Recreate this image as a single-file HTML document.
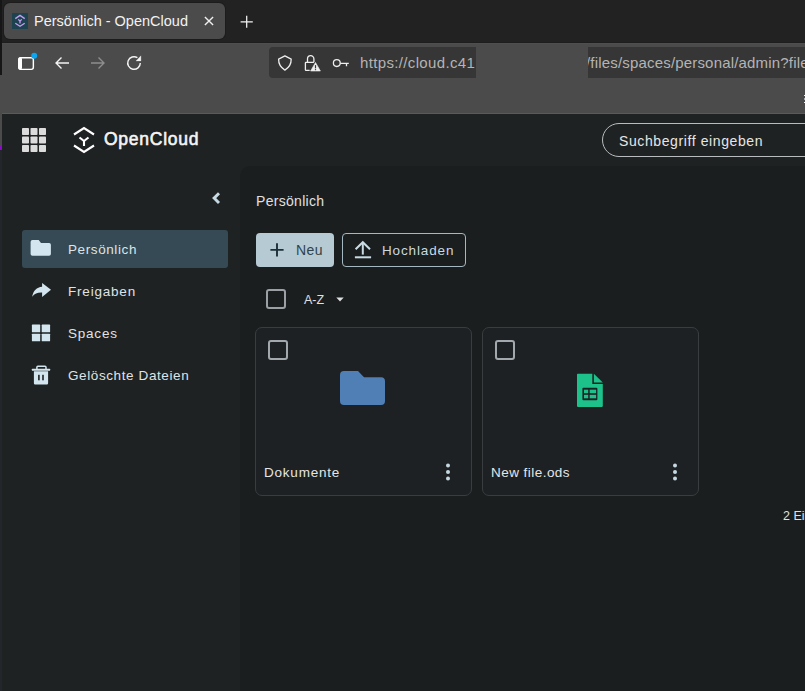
<!DOCTYPE html>
<html><head><meta charset="utf-8">
<style>
*{box-sizing:border-box;margin:0;padding:0}
html,body{width:805px;height:691px;overflow:hidden;background:#222222;font-family:"Liberation Sans",sans-serif;position:relative}
.abs{position:absolute}
#tabbar{left:0;top:0;width:805px;height:42px;background:#222222}
#lstrip{left:0;top:0;width:2px;height:75px;background:#161616}
#tab{left:4px;top:3px;width:221px;height:36px;background:#4b4b4b;border-radius:6px;box-shadow:0 0 0 1px #1c1c1c}
#fav{left:12px;top:13px;width:16px;height:16px;background:#1d4250}
#tabtitle{left:34px;top:12px;font-size:14.5px;color:#f2f2f2;white-space:nowrap;line-height:18px}
#toolbar{left:0;top:43px;width:805px;height:70px;background:#4b4b4b;border-top:1px solid #4f4f4f}
#tbdark{left:0;top:42px;width:805px;height:1px;background:#1e1e1e}
#tbline{left:0;top:113px;width:805px;height:1px;background:#5a5a5a}
#url1{left:269px;top:47px;width:207px;height:31px;background:#363636;border-radius:4px 0 0 4px}
#url2{left:588px;top:47px;width:217px;height:31px;background:#363636}
.urltext{top:55px;font-size:15px;color:#b4b4b4;white-space:nowrap;line-height:16px;letter-spacing:0.35px}
#page{left:2px;top:114px;width:803px;height:577px;background:#1f2223}
#main{left:240px;top:166px;width:565px;height:525px;background:#1b1e1f;border-top-left-radius:10px}
.sbtext{font-size:13.5px;color:#dfe3e6;white-space:nowrap;line-height:17px;letter-spacing:0.6px}
.card{width:217px;height:169px;border:1px solid #3a3d40;border-radius:7px;background:#1e2123}
.cb{width:20px;height:20px;border:2px solid #a2a9ae;border-radius:3px}
.cardtext{font-size:13.5px;color:#e3e6e8;line-height:17px;white-space:nowrap}
</style></head><body>
<div id="tabbar" class="abs"></div>
<div id="tab" class="abs"></div>
<div id="fav" class="abs"></div>
<div id="tabtitle" class="abs">Persönlich - OpenCloud</div>
<div id="tbdark" class="abs"></div>
<div id="toolbar" class="abs"></div>
<div id="tbline" class="abs"></div>
<div id="url1" class="abs"></div>
<div id="url2" class="abs"></div>
<div class="abs urltext" style="left:360px">https://cloud.c41</div>
<div class="abs" style="left:588px;top:47px;width:217px;height:31px;overflow:hidden"><div class="abs urltext" style="left:-2px;top:8px;letter-spacing:0.18px">/files/spaces/personal/admin?file</div></div>
<div id="page" class="abs"></div>
<div id="lstrip" class="abs"></div>
<div id="main" class="abs"></div>


<!-- browser chrome icons -->
<svg class="abs" style="left:12px;top:13px" width="16" height="16" viewBox="0 0 16 16"><rect width="16" height="16" fill="#1d4250"/><g fill="none" stroke="#c49ff0" stroke-width="1.3"><polyline points="3.3,5.6 8,2.4 12.7,5.6"/><polyline points="3.3,10.2 8,13.3 12.7,10.2"/><polyline points="6.1,6.5 8,7.8 9.9,6.5"/><line x1="8" y1="7.8" x2="8" y2="10.6"/></g></svg>
<svg class="abs" style="left:203px;top:15px" width="12" height="12" viewBox="0 0 12 12"><path d="M1.9 2.1L10.1 10.1M10.1 2.1L1.9 10.1" stroke="#f0f0f0" stroke-width="1.4"/></svg>
<svg class="abs" style="left:239px;top:14px" width="16" height="16" viewBox="0 0 16 16"><path d="M7.7 1.7V13.8M1.6 7.8H13.8" stroke="#f4f4f4" stroke-width="1.25"/></svg>
<svg class="abs" style="left:16px;top:51px" width="24" height="20" viewBox="0 0 24 20"><rect x="2.75" y="6.65" width="14.6" height="11.7" rx="2" fill="none" stroke="#ffffff" stroke-width="1.45"/><rect x="2.4" y="6.3" width="3.6" height="12.4" rx="1.8" fill="#ffffff"/><circle cx="18.2" cy="4.8" r="3" fill="#0aa6f2"/></svg>
<svg class="abs" style="left:54px;top:56px" width="16" height="14" viewBox="0 0 16 14"><path d="M15 7H2M7.5 1.5L2 7L7.5 12.5" fill="none" stroke="#f4f4f4" stroke-width="1.35"/></svg>
<svg class="abs" style="left:90px;top:56px" width="16" height="14" viewBox="0 0 16 14"><path d="M1 7H14M8.5 1.5L14 7L8.5 12.5" fill="none" stroke="#8e8e8e" stroke-width="1.35"/></svg>
<svg class="abs" style="left:126px;top:55px" width="16" height="16" viewBox="0 0 16 16"><path d="M14.3 8A6.3 6.3 0 1 1 11.4 2.7" fill="none" stroke="#f4f4f4" stroke-width="1.4"/><path d="M14.9 0.8V5.9H10Z" fill="#f4f4f4" stroke="#f4f4f4" stroke-width="0.3" stroke-linejoin="round"/></svg>
<svg class="abs" style="left:277px;top:55px" width="16" height="16" viewBox="0 0 16 16"><path d="M7.9 0.9L1.6 4.1C1.5 9 3.5 12.5 7.9 15.1C12.3 12.5 14.3 9 14.2 4.1Z" fill="none" stroke="#eeeeee" stroke-width="1.3" stroke-linejoin="round"/></svg>
<svg class="abs" style="left:300px;top:52px" width="52" height="22" viewBox="0 0 52 22"><g fill="none" stroke="#eeeeee" stroke-width="1.3"><path d="M7.5 10.3V6.9A3.2 3.2 0 0 1 13.9 6.9V10.3"/><path d="M9.7 18.4H6A0.6 0.6 0 0 1 5.4 17.8V10.9A0.6 0.6 0 0 1 6 10.3H13.9"/><circle cx="36.8" cy="11.1" r="3.4"/></g><path d="M15.5 10.5L20.4 19H10.6Z" fill="#eeeeee" stroke="#eeeeee" stroke-width="0.6" stroke-linejoin="round"/><rect x="14.9" y="13.1" width="1.2" height="3.3" fill="#363636"/><rect x="14.9" y="17.1" width="1.2" height="1.1" fill="#363636"/><path d="M40.2 11.3H48.8M46.5 11.3V14.3" fill="none" stroke="#eeeeee" stroke-width="1.3"/></svg>
<div class="abs" style="left:0;top:146px;width:2px;height:4px;background:#8e0bc9"></div>
<div class="abs" style="left:0;top:113px;width:2px;height:33px;background:#4b4b4b"></div>
<div class="abs" style="left:0;top:150px;width:2px;height:541px;background:#23262b"></div>
<div class="abs" style="left:804px;top:95px;width:1px;height:1.3px;background:#eeeeee"></div><div class="abs" style="left:804px;top:98px;width:1px;height:2px;background:#a8b0b8"></div><div class="abs" style="left:804px;top:102px;width:1px;height:1.3px;background:#eeeeee"></div>
<!-- top bar -->
<svg class="abs" style="left:22px;top:128px" width="24" height="24" viewBox="0 0 24 24"><g fill="#dcdcdc">
<rect x="0" y="0" width="7" height="7" rx="0.8"/><rect x="8.5" y="0" width="7" height="7" rx="0.8"/><rect x="17" y="0" width="7" height="7" rx="0.8"/>
<rect x="0" y="8.5" width="7" height="7" rx="0.8"/><rect x="8.5" y="8.5" width="7" height="7" rx="0.8"/><rect x="17" y="8.5" width="7" height="7" rx="0.8"/>
<rect x="0" y="17" width="7" height="7" rx="0.8"/><rect x="8.5" y="17" width="7" height="7" rx="0.8"/><rect x="17" y="17" width="7" height="7" rx="0.8"/>
</g></svg>
<svg class="abs" style="left:72px;top:125px" width="24" height="30" viewBox="0 0 24 30"><g fill="none" stroke="#ffffff" stroke-width="2.1" stroke-linecap="butt" stroke-linejoin="miter">
<polyline points="2,9.5 12,3 22,9.5"/><polyline points="2,20.5 12,27 22,20.5"/>
<polyline points="7.5,12.5 12,16 16.5,12.5"/><line x1="12" y1="16" x2="12" y2="21"/></g></svg>
<div class="abs" style="left:104px;top:129px;font-size:17.5px;letter-spacing:0.75px;-webkit-text-stroke:0.6px #f4f4f4;color:#f4f4f4;line-height:20px;white-space:nowrap">OpenCloud</div>
<div class="abs" style="left:602px;top:123px;width:240px;height:34px;border:1px solid #b8bcbf;border-radius:17px"></div>
<div class="abs" style="left:619px;top:133px;font-size:14px;color:#e6e6e6;line-height:16px;letter-spacing:0.6px;white-space:nowrap">Suchbegriff eingeben</div>

<!-- sidebar -->
<svg class="abs" style="left:210px;top:191px" width="12" height="14" viewBox="0 0 12 14"><polyline points="9,2.2 4.1,7.1 9,12" fill="none" stroke="#c7dae4" stroke-width="2.9"/></svg>
<div class="abs" style="left:22px;top:230px;width:206px;height:38px;background:#354a54;border-radius:3px"></div>
<svg class="abs" style="left:30px;top:240px" width="22" height="17" viewBox="-0.6 -0.1 22 17"><path d="M1.8 0H8.1L10.4 2.8H18.5A1.8 1.8 0 0 1 20.3 4.6V13.9A1.8 1.8 0 0 1 18.5 15.7H1.8A1.8 1.8 0 0 1 0 13.9V1.8A1.8 1.8 0 0 1 1.8 0Z" fill="#d3e5ef"/></svg>
<div class="abs sbtext" style="left:68px;top:241px">Persönlich</div>
<svg class="abs" style="left:32px;top:282px" width="20" height="18" viewBox="0 0 20 18"><path d="M10.1 0.9L19 7.8L10.1 15V10.6C5.5 10.4 2.6 11.8 0.2 14.8C1.1 8.8 4.8 5.1 10.1 4.7Z" fill="#d3e5ef"/></svg>
<div class="abs sbtext" style="left:68px;top:283px;letter-spacing:0.8px">Freigaben</div>
<svg class="abs" style="left:31px;top:324px" width="21" height="19" viewBox="0 0 21 19"><g fill="#d3e5ef"><rect x="0.9" y="0.6" width="8.3" height="7.7" rx="0.6"/><rect x="10.7" y="0.6" width="8.4" height="7.7" rx="0.6"/><rect x="0.9" y="9.7" width="8.3" height="7.6" rx="0.6"/><rect x="10.7" y="9.7" width="8.4" height="7.6" rx="0.6"/></g></svg>
<div class="abs sbtext" style="left:68px;top:325px;letter-spacing:0.78px">Spaces</div>
<svg class="abs" style="left:31px;top:365px" width="21" height="21" viewBox="0 0 21 21"><g fill="#d3e5ef"><path d="M5.9 4V2.3A1 1 0 0 1 6.9 1.3H14A1 1 0 0 1 15 2.3V4" fill="none" stroke="#d3e5ef" stroke-width="1.5"/><rect x="0.9" y="3.7" width="18.2" height="2" rx="0.5"/><path d="M2.9 6.2H17.1V18.2A1.2 1.2 0 0 1 15.9 19.4H4.1A1.2 1.2 0 0 1 2.9 18.2Z"/></g><g fill="#1f2223"><rect x="7.1" y="9.8" width="1.6" height="5.5"/><rect x="11.2" y="9.8" width="1.6" height="5.5"/></g></svg>
<div class="abs sbtext" style="left:68px;top:367px">Gelöschte Dateien</div>

<!-- main -->
<div class="abs" style="left:256px;top:193px;font-size:14px;color:#e0e0e0;line-height:16px;letter-spacing:0.3px;white-space:nowrap">Persönlich</div>
<div class="abs" style="left:256px;top:233px;width:78px;height:34px;background:#b6cad4;border-radius:4px"></div>
<svg class="abs" style="left:270px;top:243px" width="14" height="14" viewBox="0 0 14 14"><path d="M7 0.3V13.5M0.4 6.9H13.6" stroke="#1d3039" stroke-width="1.9"/></svg>
<div class="abs" style="left:296px;top:242px;font-size:14px;color:#2e434b;line-height:16px;letter-spacing:0.4px;white-space:nowrap">Neu</div>
<div class="abs" style="left:342px;top:233px;width:124px;height:34px;border:1px solid #a5b7c0;border-radius:4px"></div>
<svg class="abs" style="left:353px;top:239px" width="20" height="21" viewBox="0 0 20 21"><g stroke="#c9dce6" stroke-width="2" fill="none"><path d="M2.6 10.2L9.8 3.2L17 10.2"/><path d="M9.8 4V15.6"/><path d="M1.9 18.3H18.1"/></g></svg>
<div class="abs sbtext" style="left:382px;top:242px;letter-spacing:0.87px;color:#c9d9e1">Hochladen</div>
<div class="abs" style="left:266px;top:289px;width:20px;height:20px;border:2px solid #9aa0a4;border-radius:3px"></div>
<div class="abs" style="left:304px;top:292px;font-size:12.5px;color:#e0e0e0;line-height:16px;white-space:nowrap">A-Z</div>
<svg class="abs" style="left:335px;top:296px" width="10" height="7" viewBox="0 0 10 7"><path d="M1.3 1.5H8.7L5 5.6Z" fill="#e0e0e0"/></svg>

<!-- cards -->
<div class="abs card" style="left:255px;top:327px"></div>
<div class="abs cb" style="left:268px;top:340px"></div>
<svg class="abs" style="left:340px;top:371px" width="45" height="34" viewBox="0 0 45 34"><path d="M4 0H18L24 6.2H41A4 4 0 0 1 45 10.2V30A4 4 0 0 1 41 34H4A4 4 0 0 1 0 30V4A4 4 0 0 1 4 0Z" fill="#4f7fb4"/></svg>
<div class="abs cardtext" style="left:264px;top:464px;letter-spacing:0.78px">Dokumente</div>
<svg class="abs" style="left:444px;top:462px" width="8" height="20" viewBox="0 0 8 20"><g fill="#c5d8e2"><circle cx="4" cy="3.5" r="2"/><circle cx="4" cy="10" r="2"/><circle cx="4" cy="16.4" r="2"/></g></svg>

<div class="abs card" style="left:482px;top:327px"></div>
<div class="abs cb" style="left:495px;top:340px"></div>
<svg class="abs" style="left:577px;top:373px" width="26" height="34" viewBox="0 -0.7 26 34"><path d="M0.8 0H15.3V10.2H25.8V32.4A0.8 0.8 0 0 1 25 33.2H0.8A0.8 0.8 0 0 1 0 32.4V0.8A0.8 0.8 0 0 1 0.8 0Z" fill="#1cc28a"/><path d="M16.9 0L25.8 8.9H16.9Z" fill="#1cc28a"/><rect x="5.4" y="14" width="15" height="12.5" rx="1" fill="#1e2123"/><g fill="#1cc28a"><rect x="7" y="16" width="4.2" height="3.5"/><rect x="12.7" y="16" width="6.4" height="3.5"/><rect x="7" y="21.1" width="4.2" height="3.5"/><rect x="12.7" y="21.1" width="6.4" height="3.5"/></g></svg>
<div class="abs cardtext" style="left:491px;top:464px;letter-spacing:0.46px">New file.ods</div>
<svg class="abs" style="left:671px;top:462px" width="8" height="20" viewBox="0 0 8 20"><g fill="#c5d8e2"><circle cx="4" cy="3.5" r="2"/><circle cx="4" cy="10" r="2"/><circle cx="4" cy="16.4" r="2"/></g></svg>

<div class="abs" style="left:783px;top:508px;font-size:12.5px;color:#e0e0e0;line-height:16px;white-space:nowrap">2 Einträge</div>
</body></html>
